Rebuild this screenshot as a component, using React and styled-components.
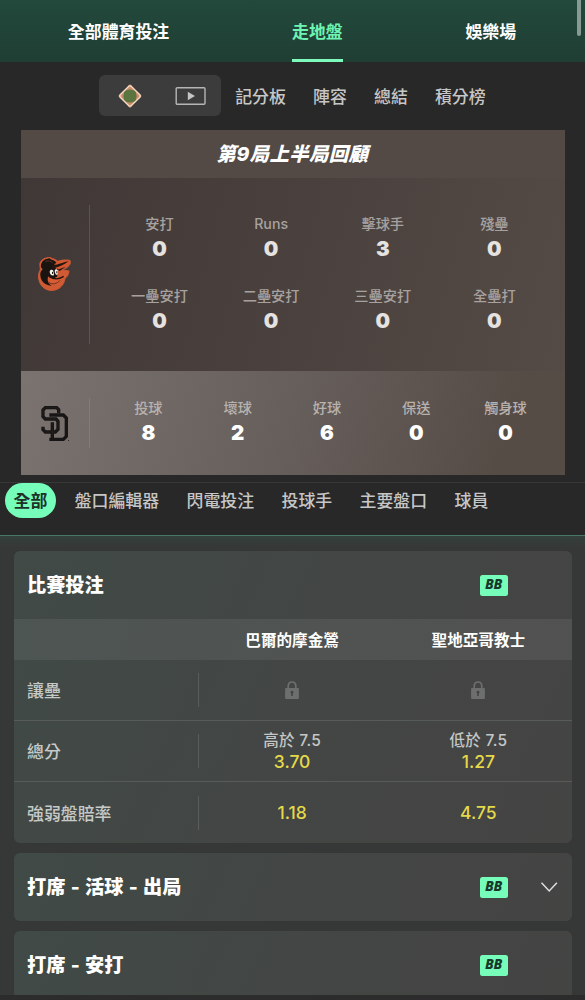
import React from "react";
import styled, { createGlobalStyle, css } from "styled-components";

const GlobalStyle = createGlobalStyle`
  * {
    box-sizing: border-box;
  }

  body {
    margin: 0;
    background: #282828;
    color: #d6d6d6;
    font-family: Inter, "Noto Sans CJK TC", sans-serif;
    overflow: hidden;
  }
`;

// Styled Components
const Page = styled.div`
  width: 585px;
  height: 1000px;
  overflow: hidden;
  position: relative;
  display: flex;
  flex-direction: column;
  background: #282828;
`;

const ScrollThumb = styled.div`
  position: absolute;
  top: -20px;
  right: 4px;
  width: 4px;
  height: 56px;
  border-radius: 2px;
  background: #879a93;
`;

const Header = styled.nav`
  height: 62px;
  flex: none;
  display: flex;
  justify-content: center;
  gap: 122.8px;
  padding-right: 1px;
  background: linear-gradient(180deg, #22493b 0%, #203e34 100%);
`;

const HeaderTab = styled.div`
  height: 62px;
  line-height: 64px;
  font-size: 16.9px;
  font-weight: 700;
  white-space: nowrap;
  color: ${(props) => (props.$active ? "#6ff3b2" : "#ffffff")};
  box-shadow: ${(props) => (props.$active ? "inset 0 -3px 0 #7cfbbd" : "none")};
`;

const ViewBar = styled.div`
  height: 67.5px;
  flex: none;
  display: flex;
  align-items: center;
  gap: 27.2px;
  padding-left: 99px;
`;

const ViewSwitch = styled.div`
  width: 122px;
  height: 41px;
  margin-right: -13px;
  border-radius: 6px;
  background: #3c3c3c;
  display: grid;
  grid-template-columns: 1fr 1fr;
  place-items: center;

  svg {
    display: block;
  }
`;

const ViewLink = styled.span`
  font-size: 16.9px;
  font-weight: 500;
  line-height: 24px;
  padding-top: 2px;
  color: #c6c6c6;
`;

const Recap = styled.section`
  width: 544px;
  height: 345px;
  flex: none;
  margin-left: 20.5px;
  display: flex;
  flex-direction: column;
`;

const RecapTitle = styled.h2`
  margin: 0;
  height: 48px;
  line-height: 49px;
  text-align: center;
  font-size: 19.4px;
  font-weight: 800;
  font-style: italic;
  letter-spacing: 0.4px;
  color: #ffffff;
  background: #534a45;
`;

const TeamRow = styled.div`
  display: flex;
  align-items: center;
  height: ${(props) => (props.$fielding ? "104px" : "193.5px")};
  background: ${(props) =>
    props.$fielding
      ? "linear-gradient(105deg, #7b7370 0%, #665e5b 50%, #564c46 88%, #564c46 100%)"
      : "linear-gradient(105deg, #403836 0%, #4a413e 50%, #544b46 100%)"};
`;

const TeamLogo = styled.div`
  width: 69px;
  height: ${(props) => (props.$fielding ? "50px" : "139px")};
  display: flex;
  align-items: center;
  justify-content: center;
  padding-right: ${(props) => (props.$fielding ? "0" : "1px")};
  border-right: 1px solid rgba(255, 255, 255, ${(props) => (props.$fielding ? 0.1 : 0.13)});
`;

const StatGrid = styled.div`
  width: 446.5px;
  margin: -3px 0 0 14.2px;
  display: grid;
  grid-template-columns: repeat(${(props) => props.$columns}, 1fr);
  row-gap: 24px;
`;

const Stat = styled.div`
  text-align: center;
`;

const StatLabel = styled.div`
  font-size: 14.2px;
  font-weight: 500;
  line-height: 22px;
  height: 24px;
  color: ${(props) => (props.$fielding ? "#b8b2af" : "#a7a19f")};
`;

const StatValue = styled.div`
  font-size: 20.5px;
  font-weight: 900;
  line-height: 24px;
  height: 24px;
  color: ${(props) => (props.$fielding ? "#ffffff" : "#e6e2e0")};
`;

const FilterBar = styled.div`
  height: 53px;
  flex: none;
  margin-top: 7.5px;
  padding-left: 5px;
  border-top: 1px solid #363836;
  display: flex;
  align-items: flex-start;
  gap: 27.4px;
`;

const Filter = styled.span`
  font-size: 16.9px;
  font-weight: 500;
  line-height: 36px;
  height: 35px;
  color: #c6c6c6;
  white-space: nowrap;

  ${(props) =>
    props.$active &&
    css`
      width: 51px;
      margin-right: -8.7px;
      border-radius: 18px;
      text-align: center;
      font-weight: 700;
      color: #1c3128;
      background: #76fdb9;
    `}
`;

const Markets = styled.main`
  flex: 1;
  padding: 15px 13.5px 0 13.5px;
  border-top: 1.5px solid #48776a;
  background: linear-gradient(180deg, #34403c 0, #363737 12px);
  overflow: hidden;
  display: flex;
  flex-direction: column;
  gap: 10px;
`;

const Card = styled.section`
  flex: none;
  border-radius: 6px;
  overflow: hidden;
  background: linear-gradient(115deg, #404a46 0%, #434644 50%, #444443 100%);
`;

const CardHeader = styled.div`
  height: 68px;
  padding: 0 13.5px;
  display: flex;
  align-items: center;
`;

const CardTitle = styled.h3`
  margin: 0;
  flex: 1;
  font-size: 19.2px;
  font-weight: 800;
  line-height: 28px;
  word-spacing: 1.1px;
  color: #ffffff;
`;

const Badge = styled.span`
  width: 28px;
  height: 21px;
  border-radius: 2.5px;
  background: #76fdb9;
  color: #17382b;
  font-family: "Noto Sans", sans-serif;
  font-size: 14px;
  font-weight: 800;
  font-style: italic;
  line-height: 18.5px;
  letter-spacing: -0.3px;
  text-align: center;
`;

const Toggle = styled.div`
  width: 50.5px;
  height: 24px;
  display: flex;
  align-items: center;
  justify-content: flex-end;
`;

const MarketRow = styled.div`
  display: grid;
  grid-template-columns: 185.5px 1fr 1fr;
  align-items: center;
  height: ${(props) => (props.$head ? "41px" : "61px")};
  background: ${(props) => (props.$head ? "rgba(255, 255, 255, 0.07)" : "transparent")};
  border-bottom: ${(props) => (props.$line ? "1.5px solid #575c59" : "none")};
`;

const MarketLabel = styled.div`
  height: 34px;
  line-height: 36px;
  padding-left: 13.5px;
  font-size: 16.9px;
  font-weight: 500;
  color: #c6c9c7;
  border-right: 1px solid #585c5a;
`;

const TeamName = styled.div`
  padding-bottom: 2px;
  text-align: center;
  font-size: 15.6px;
  font-weight: 700;
  color: #ffffff;
`;

const Selection = styled.div`
  display: flex;
  flex-direction: column;
  align-items: center;
  justify-content: center;
`;

const Line = styled.span`
  font-size: 15.5px;
  font-weight: 500;
  line-height: 23px;
  height: 22.5px;
  letter-spacing: 0.3px;
  color: #c4c7c5;
`;

const Odds = styled.span`
  font-size: 17.5px;
  font-weight: 500;
  line-height: 22px;
  height: 22px;
  color: #e5d94a;
`;

const BottomEdge = styled.div`
  height: 5.5px;
  flex: none;
  background: #2c2c2c;
`;

// Icons
const DiamondIcon = () => (
  <svg width="26" height="26" viewBox="0 0 26 26">
    <rect x="5.2" y="5.2" width="15.6" height="15.6" rx="1" transform="rotate(45 13 13)" fill="#c78c68" stroke="#f7ddc9" strokeWidth="1.3" />
    <path d="M9 7.5h8l1.8 1.8v7.6L17 18.6H9l-1.8-1.8V9.2z" fill="#5a7540" />
    <circle cx="13" cy="13" r="6.6" fill="#5a7540" />
    <path d="M11.4 2.8 13 1.6l1.6 1.2-1.6 1.6zM1.8 13l1.4-1.5L4.6 13l-1.4 1.5zM21.4 13l1.4-1.5 1.4 1.5-1.4 1.5zM11.4 23.2l1.6-1.6 1.6 1.6-1.6 1.2z" fill="#f1bf9d" />
  </svg>
);

const VideoIcon = () => (
  <svg width="32" height="20" viewBox="0 0 32 20">
    <rect x="1.2" y="1.7" width="28.8" height="16.6" rx="1" fill="none" stroke="#b5b5b5" strokeWidth="1.4" />
    <path d="M12.8 5.8 20 10l-7.2 4.2z" fill="#c4c4c4" />
  </svg>
);

const OriolesLogo = () => (
  <svg width="36" height="35" viewBox="21 23 108 105">
    <path
      d="M33 51C30 36 41 28 52 26l9-3 9 5c7 1 12 4 16 8 11-4 23-5 37-3l1 9c-3 9-12 15-25 20l21 3c-1 11-6 18-12 22-2 15-11 29-27 34-18 6-39 0-48-20-5-11-6-24-2-34l3-6z"
      fill="#cf5a34"
      stroke="#cf5a34"
      strokeWidth="3"
      strokeLinejoin="round"
    />
    <path
      d="M36 54c-2-13 7-23 17-25l8-2 8 5c7 1 10 4 13 8l-8 9-4 11c-9 2-12 10-10 17-7 10-5 25 8 32-19 0-33-13-34-31-1-7 2-14 7-18z"
      fill="#1a1411"
    />
    <path d="M72 50l16 8-4 24-12 6-14-6-2-14z" fill="#1a1411" />
    <path d="M75 47c12-10 27-13 45-10-2 8-11 15-24 19l-14 3c-3-4-6-8-7-12z" fill="#d5582f" />
    <path d="M64 48c18 1 31-7 55-12-15 11-31 18-46 21zM86 61l24-9-18 13z" fill="#241510" />
    <path d="M62 67c1-6 8-7 11-3l2 13c-5 5-13-2-13-10zM77 64c2-6 9-5 10 1l-1 10c-4 4-8 0-9-11z" fill="#f6f3ec" />
    <path d="M69 68l3-1v7l-3-1zM82 66l3-1v6l-3 1z" fill="#161210" />
    <path d="M63 84c15 6 33 3 52-14-6 14-12 20-22 24-2 9-10 14-21 14-13-3-17-15-9-24z" fill="#d75d35" />
    <path d="M61 82c14 9 31 7 43-1" fill="none" stroke="#27150f" strokeWidth="4" />
    <path d="M59 99c10 8 25 5 34-6" fill="none" stroke="#5b2818" strokeWidth="2.5" />
    <path d="M49 37c7-4 16-3 22 4" fill="none" stroke="#74402e" strokeWidth="2" />
  </svg>
);

const PadresLogo = () => (
  <svg width="28" height="36" viewBox="0 0 84 108">
    <g fill="none" strokeLinejoin="miter">
      <path d="M53 25V14l-6-6H13L6 15v20l7 7h32l6 7v24l-8 8H13l-7-7V65" stroke="#171515" strokeWidth="10" />
      <path d="M25 30h42l9 9v55l-9 9H25M34 52v50" stroke="#171515" strokeWidth="10" />
      <path d="M53 24V14l-6-6H13L6 15v20l7 7h32l6 7v24l-8 8H13l-7-7V66M34 54v46" stroke="#3c3734" strokeWidth="0.8" />
    </g>
    <circle cx="82.5" cy="106.5" r="1.5" fill="#171515" />
  </svg>
);

const LockIcon = () => (
  <svg width="14" height="18" viewBox="0 0 14 18">
    <path d="M3.2 8V5.2C3.2 2.5 4.7 1 7 1s3.8 1.5 3.8 4.2V8" fill="none" stroke="#6c6f6e" strokeWidth="1.7" />
    <path
      fillRule="evenodd"
      d="M1 7h12a.9.9 0 0 1 .9.9v9.2a.9.9 0 0 1-.9.9H1a.9.9 0 0 1-.9-.9V7.9A.9.9 0 0 1 1 7zm6 2.7a1.5 1.5 0 0 0-.8 2.8V15h1.6v-2.5A1.5 1.5 0 0 0 7 9.7z"
      fill="#6c6f6e"
    />
  </svg>
);

const ChevronIcon = () => (
  <svg width="18" height="12" viewBox="0 0 18 12">
    <path d="M1.5 1.8 9.2 10 16.9 1.8" fill="none" stroke="#dedede" strokeWidth="1.5" />
  </svg>
);

const battingStats = [
  ["安打", 0],
  ["Runs", 0],
  ["擊球手", 3],
  ["殘壘", 0],
  ["一壘安打", 0],
  ["二壘安打", 0],
  ["三壘安打", 0],
  ["全壘打", 0],
];

const pitchingStats = [
  ["投球", 8],
  ["壞球", 2],
  ["好球", 6],
  ["保送", 0],
  ["觸身球", 0],
];

const filters = ["全部", "盤口編輯器", "閃電投注", "投球手", "主要盤口", "球員"];

const markets = [
  { label: "讓壘", picks: [{ locked: true }, { locked: true }] },
  { label: "總分", picks: [{ line: "高於 7.5", odds: "3.70" }, { line: "低於 7.5", odds: "1.27" }] },
  { label: "強弱盤賠率", picks: [{ odds: "1.18" }, { odds: "4.75" }] },
];

function TeamStats({ logo, stats, columns, fielding }) {
  return (
    <TeamRow $fielding={fielding}>
      <TeamLogo $fielding={fielding}>{logo}</TeamLogo>
      <StatGrid $columns={columns}>
        {stats.map(([label, value]) => (
          <Stat key={label}>
            <StatLabel $fielding={fielding}>{label}</StatLabel>
            <StatValue $fielding={fielding}>{value}</StatValue>
          </Stat>
        ))}
      </StatGrid>
    </TeamRow>
  );
}

function MarketHeader({ title, collapsed }) {
  return (
    <CardHeader>
      <CardTitle>{title}</CardTitle>
      <Badge>BB</Badge>
      <Toggle>{collapsed && <ChevronIcon />}</Toggle>
    </CardHeader>
  );
}

function App() {
  return (
    <Page>
      <GlobalStyle />
      <Header>
        <HeaderTab>全部體育投注</HeaderTab>
        <HeaderTab $active>走地盤</HeaderTab>
        <HeaderTab>娛樂場</HeaderTab>
      </Header>

      <ViewBar>
        <ViewSwitch>
          <DiamondIcon />
          <VideoIcon />
        </ViewSwitch>
        <ViewLink>記分板</ViewLink>
        <ViewLink>陣容</ViewLink>
        <ViewLink>總結</ViewLink>
        <ViewLink>積分榜</ViewLink>
      </ViewBar>

      {/* Half-inning recap */}
      <Recap>
        <RecapTitle>第9局上半局回顧</RecapTitle>
        <TeamStats logo={<OriolesLogo />} stats={battingStats} columns={4} />
        <TeamStats logo={<PadresLogo />} stats={pitchingStats} columns={5} fielding />
      </Recap>

      <FilterBar>
        {filters.map((name, i) => (
          <Filter key={name} $active={i === 0}>
            {name}
          </Filter>
        ))}
      </FilterBar>

      {/* Betting markets */}
      <Markets>
        <Card>
          <MarketHeader title="比賽投注" />
          <MarketRow $head>
            <span />
            <TeamName>巴爾的摩金鶯</TeamName>
            <TeamName>聖地亞哥教士</TeamName>
          </MarketRow>
          {markets.map((market, i) => (
            <MarketRow key={market.label} $line={i < markets.length - 1}>
              <MarketLabel>{market.label}</MarketLabel>
              {market.picks.map((pick, j) => (
                <Selection key={j}>
                  {pick.locked && <LockIcon />}
                  {pick.line && <Line>{pick.line}</Line>}
                  {pick.odds && <Odds>{pick.odds}</Odds>}
                </Selection>
              ))}
            </MarketRow>
          ))}
        </Card>
        <Card>
          <MarketHeader title="打席 - 活球 - 出局" collapsed />
        </Card>
        <Card>
          <MarketHeader title="打席 - 安打" />
        </Card>
      </Markets>
      <BottomEdge />

      <ScrollThumb />
    </Page>
  );
}

export default App;
